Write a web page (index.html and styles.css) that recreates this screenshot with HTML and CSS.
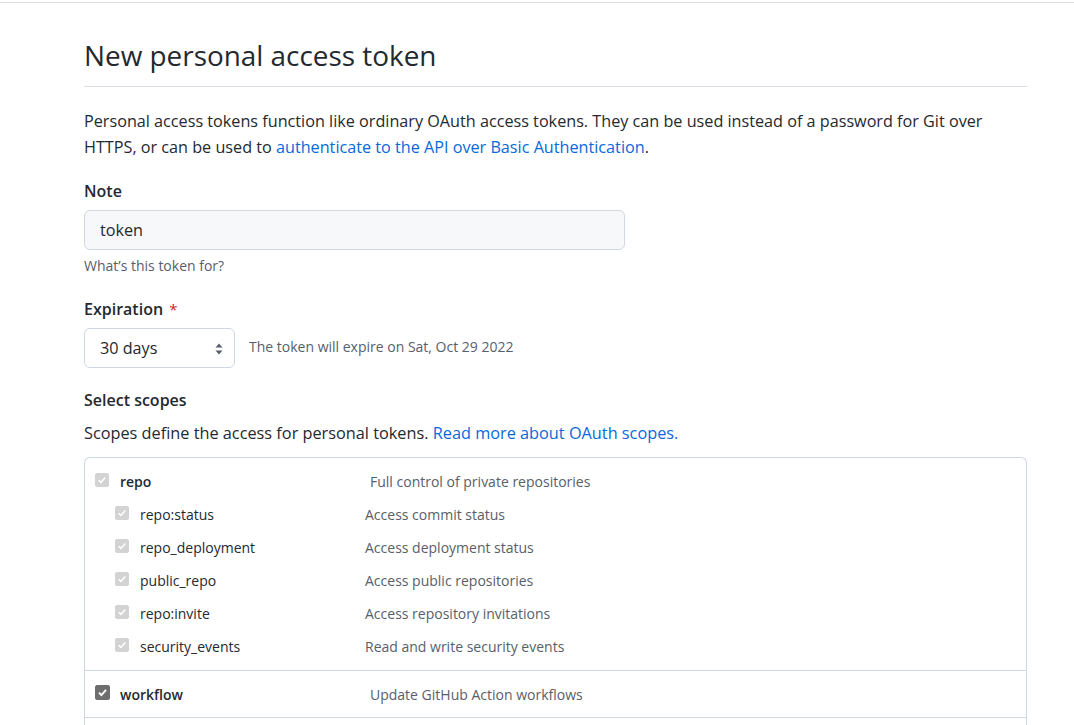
FILE: index.html
```html
<!DOCTYPE html>
<html lang="en">
<head>
<meta charset="utf-8">
<title>New personal access token</title>
<link rel="stylesheet" href="styles.css">
</head>
<body>
<div class="topbar"></div>
<main class="page">
  <div class="subhead">
    <h1 class="subhead-title">New personal access token</h1>
  </div>
  <p class="intro">Personal access tokens function like ordinary OAuth access tokens. They can be used instead of a password for Git over HTTPS, or can be used to <a href="#" class="link">authenticate to the API over Basic Authentication</a>.</p>

  <div class="field">
    <label class="field-label">Note</label>
    <div class="input">token</div>
    <p class="note">What’s this token for?</p>
  </div>

  <div class="field field-exp">
    <label class="field-label">Expiration <span class="req">*</span></label>
    <div class="exp-row">
      <div class="select">
        <span>30 days</span>
        <svg class="select-arrows" width="8" height="12" viewBox="0 0 8 12"><path d="M4 0.5 L7.5 4.5 H0.5 Z M4 11.5 L7.5 7.5 H0.5 Z" fill="#57606a"/></svg>
      </div>
      <span class="exp-text">The token will expire on Sat, Oct 29 2022</span>
    </div>
  </div>

  <div class="field field-scopes">
    <label class="field-label">Select scopes</label>
    <p class="scopes-desc">Scopes define the access for personal tokens. <a href="#" class="link">Read more about OAuth scopes.</a></p>
  </div>

  <div class="scopes">
    <div class="group">
      <div class="row parent">
        <span class="cb cb-disabled"><svg viewBox="0 0 14 14"><path d="M3.2 7.2 L5.8 9.8 L10.8 4.2" stroke="#fff" stroke-width="1.8" fill="none"/></svg></span>
        <span class="scope-name">repo</span>
        <span class="scope-desc">Full control of private repositories</span>
      </div>
      <div class="row child">
        <span class="cb cb-disabled"><svg viewBox="0 0 14 14"><path d="M3.2 7.2 L5.8 9.8 L10.8 4.2" stroke="#fff" stroke-width="1.8" fill="none"/></svg></span>
        <span class="scope-name">repo:status</span>
        <span class="scope-desc">Access commit status</span>
      </div>
      <div class="row child">
        <span class="cb cb-disabled"><svg viewBox="0 0 14 14"><path d="M3.2 7.2 L5.8 9.8 L10.8 4.2" stroke="#fff" stroke-width="1.8" fill="none"/></svg></span>
        <span class="scope-name">repo_deployment</span>
        <span class="scope-desc">Access deployment status</span>
      </div>
      <div class="row child">
        <span class="cb cb-disabled"><svg viewBox="0 0 14 14"><path d="M3.2 7.2 L5.8 9.8 L10.8 4.2" stroke="#fff" stroke-width="1.8" fill="none"/></svg></span>
        <span class="scope-name">public_repo</span>
        <span class="scope-desc">Access public repositories</span>
      </div>
      <div class="row child">
        <span class="cb cb-disabled"><svg viewBox="0 0 14 14"><path d="M3.2 7.2 L5.8 9.8 L10.8 4.2" stroke="#fff" stroke-width="1.8" fill="none"/></svg></span>
        <span class="scope-name">repo:invite</span>
        <span class="scope-desc">Access repository invitations</span>
      </div>
      <div class="row child">
        <span class="cb cb-disabled"><svg viewBox="0 0 14 14"><path d="M3.2 7.2 L5.8 9.8 L10.8 4.2" stroke="#fff" stroke-width="1.8" fill="none"/></svg></span>
        <span class="scope-name">security_events</span>
        <span class="scope-desc">Read and write security events</span>
      </div>
    </div>
    <div class="group group-single">
      <div class="row parent">
        <span class="cb cb-checked"><svg viewBox="0 0 14 14"><path d="M3.2 7.2 L5.8 9.8 L10.8 4.2" stroke="#fff" stroke-width="2" fill="none"/></svg></span>
        <span class="scope-name">workflow</span>
        <span class="scope-desc">Update GitHub Action workflows</span>
      </div>
    </div>
    <div class="group group-next"></div>
  </div>
</main>
</body>
</html>
```

FILE: styles.css
```css
html, body {
  margin: 0;
  padding: 0;
  background: #ffffff;
}

body {
  font-family: "Open Sans", "Noto Sans", "Liberation Sans", sans-serif;
  color: #24292f;
  overflow: hidden;
}

.topbar {
  height: 2px;
  border-bottom: 1px solid #d8dee4;
}

.page {
  width: 943px;
  margin-left: 84px;
}

.subhead {
  padding-top: 34px;
  padding-bottom: 13px;
  border-bottom: 1px solid #d8dee4;
}

.subhead-title {
  margin: 0;
  font-size: 27.9px;
  font-weight: 400;
  line-height: 36px;
  color: #24292f;
}

.intro {
  margin: 21px 0 0;
  font-size: 16.2px;
  line-height: 26px;
}

.link {
  color: #0969da;
  text-decoration: none;
}

.field {
  margin-top: 19px;
}

.field-label {
  display: block;
  font-size: 16px;
  font-weight: 600;
  line-height: 24px;
}

.req {
  color: #cf222e;
  font-weight: 400;
  font-size: 15px;
  margin-left: 2px;
}

.input {
  box-sizing: border-box;
  margin-top: 7px;
  width: 541px;
  height: 40px;
  padding: 0 15px;
  display: flex;
  align-items: center;
  font-size: 16.2px;
  background: #f6f8fa;
  border: 1px solid #d0d7de;
  border-radius: 6px;
}

.note {
  margin: 6px 0 0;
  font-size: 14px;
  line-height: 20px;
  color: #57606a;
}

.field-exp {
  margin-top: 21px;
}

.exp-row {
  margin-top: 7px;
  display: flex;
  align-items: center;
  gap: 14px;
}

.select {
  box-sizing: border-box;
  width: 151px;
  height: 40px;
  padding: 0 11px 0 15px;
  display: flex;
  align-items: center;
  justify-content: space-between;
  font-size: 16.2px;
  border: 1px solid #d0d7de;
  border-radius: 6px;
  background: #ffffff;
}

.select-arrows {
  display: block;
  margin-top: 1px;
}

.exp-text {
  font-size: 14px;
  color: #57606a;
  line-height: 20px;
  margin-top: -2px;
}

.field-scopes {
  margin-top: 20px;
}

.scopes-desc {
  margin: 8px 0 0;
  font-size: 16.3px;
  line-height: 26px;
}

.scopes {
  margin-top: 11px;
  border: 1px solid #d0d7de;
  border-radius: 6px 6px 0 0;
  border-bottom: none;
}

.group {
  padding: 7px 0 7px 10px;
}

.group + .group {
  border-top: 1px solid #d0d7de;
}

.group-single {
  padding-bottom: 6px;
}

.group-next {
  height: 40px;
}

.row {
  display: flex;
  align-items: center;
  height: 33px;
  font-size: 14px;
}

.row.child {
  padding-left: 20px;
}

.cb {
  box-sizing: border-box;
  flex: none;
  width: 14px;
  height: 14px;
  margin-right: 11px;
  margin-top: -4px;
  border-radius: 2px;
  border: 1px solid #767676;
  background: #fff;
}

.cb svg {
  display: block;
  width: 12px;
  height: 12px;
}

.cb-disabled {
  background: #d3d3d3;
  border-color: #d3d3d3;
}

.cb-checked {
  width: 15px;
  height: 15px;
  margin-right: 10px;
  background: #6e6e6e;
  border-color: #6e6e6e;
}

.cb-checked svg {
  width: 13px;
  height: 13px;
}

.scope-name {
  flex: none;
  width: 250px;
  color: #24292f;
}

.parent .scope-name {
  font-weight: 600;
}

.child .scope-name {
  width: 225px;
}

.scope-desc {
  color: #57606a;
}
```
